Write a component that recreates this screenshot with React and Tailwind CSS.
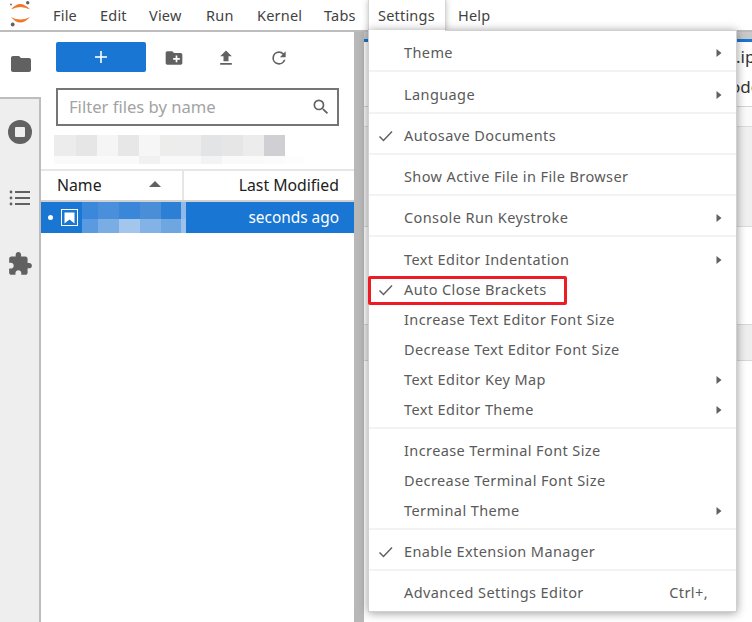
import React from "react";

function Caret() {
  return (
    <svg width="6" height="10" viewBox="0 0 6 10" className="block">
      <path d="M0.5 1 L5.5 5 L0.5 9 Z" fill="#616161" />
    </svg>
  );
}

function Check() {
  return (
    <svg width="16" height="14" viewBox="0 0 16 14" className="block">
      <path d="M1.5 7.5 L5.5 11.5 L14 2.5" fill="none" stroke="#616161" strokeWidth="1.5" />
    </svg>
  );
}

function Item({ label, checked, sub, shortcut }) {
  return (
    <div className="h-[30px] flex items-center relative pl-[35px] pr-[14px] text-[14.5px] text-[#5a5a5a]">
      {checked && (
        <span className="absolute left-[9px] top-[8px]">
          <Check />
        </span>
      )}
      <span className="flex-1 whitespace-nowrap tracking-[0.4px]">{label}</span>
      {sub && <Caret />}
      {shortcut && <span className="mr-[14px] tracking-[0.4px]">{shortcut}</span>}
    </div>
  );
}

function Divider({ h }) {
  return (
    <div className={h === 12 ? "h-[12px] pt-[2px]" : "h-[11px] pt-[2px]"}>
      <div className="h-[2px] bg-[#f3f3f3]" />
    </div>
  );
}

const mosaicTop = ["#ececec", "#e6e6e6", "#f5f5f5", "#e6e7e6", "#f6f6f6", "#ededec", "#ededed", "#e3e4e5", "#e6e6e6", "#ececec", "#d0d0d4", "#ffffff"];
const mosaicWidths = [22, 21, 21, 21, 21, 21, 20, 21, 21, 21, 21, 18];
const mosaicBot = ["#fafafa", "#fafafa", "#fafafa", "#fafafa", "#f1f1f1", "#f9f9f9", "#f9f9f9", "#f2f3f4", "#fafafa", "#fafafa", "#fbfbfb", "#fdfdfd"];
const rowTop = ["#3b87d9", "#4a8fdb", "#3a86d8", "#4a8ed8", "#2d7fd6", "#8fb9e8"];
const rowBot = ["#5a9ae0", "#7aade4", "#a3c6ec", "#82b2e6", "#6ea6e2", "#9cc1ea"];
const rowW = [16, 21, 21, 21, 20, 5];

export default function App() {
  return (
    <div className="w-[752px] h-[622px] bg-white overflow-hidden relative font-['Noto_Sans','Open_Sans',sans-serif] flex flex-col">
      {/* Top bar */}
      <div className="h-[32px] shrink-0 flex border-b-2 border-[#bdbdbd] relative">
        <div className="w-[41px] shrink-0">
          <svg width="41" height="30" viewBox="0 0 41 30" className="block">
            <path d="M11 9.5 Q20 -1.5 30 9.5 Q20 4.5 11 9.5 Z" fill="#f37726" />
            <path d="M11 17 Q20 28 30 17 Q20 22 11 17 Z" fill="#f37726" />
            <circle cx="27.7" cy="2.7" r="1.7" fill="#616161" />
            <circle cx="11" cy="4.5" r="1" fill="#757575" />
            <circle cx="12.7" cy="24.5" r="1.9" fill="#616161" />
          </svg>
        </div>
        <div className="flex h-[30px] pt-[1px] items-center text-[14.5px] text-[#424242] tracking-[0.2px]">
          <span className="ml-[12px] w-[47px]">File</span>
          <span className="w-[49px]">Edit</span>
          <span className="w-[57px]">View</span>
          <span className="w-[51px]">Run</span>
          <span className="w-[67px]">Kernel</span>
          <span className="w-[44px]">Tabs</span>
          <span className="w-[80px] ml-[10px]">Settings</span>
          <span>Help</span>
        </div>
      </div>

      {/* Body */}
      <div className="flex-1 flex min-h-0">
        {/* Sidebar */}
        <div className="w-[41px] shrink-0 flex flex-col border-r-2 border-[#bdbdbd]">
          <div className="h-[65px] bg-white flex items-center justify-center -mr-[2px] relative pb-[1px]">
            <svg width="24" height="24" viewBox="0 0 24 24">
              <path d="M10 4H4c-1.1 0-2 .9-2 2v12c0 1.1.9 2 2 2h16c1.1 0 2-.9 2-2V8c0-1.1-.9-2-2-2h-8l-2-2z" fill="#616161" />
            </svg>
          </div>
          <div className="flex-1 bg-[#eeeeee] border-t-2 border-[#bdbdbd] flex flex-col items-center">
            <div className="h-[66px] flex items-center justify-center">
              <svg width="24" height="24" viewBox="0 0 24 24">
                <circle cx="12" cy="12" r="12" fill="#616161" />
                <rect x="7" y="7" width="10" height="10" rx="1" fill="#eeeeee" />
              </svg>
            </div>
            <div className="h-[66px] flex items-center justify-center">
              <svg width="22" height="16" viewBox="0 0 22 16">
                <circle cx="2" cy="2" r="1.4" fill="#616161" />
                <circle cx="2" cy="8" r="1.4" fill="#616161" />
                <circle cx="2" cy="14" r="1.4" fill="#616161" />
                <rect x="6" y="1" width="15" height="2" fill="#616161" />
                <rect x="6" y="7" width="15" height="2" fill="#616161" />
                <rect x="6" y="13" width="15" height="2" fill="#616161" />
              </svg>
            </div>
            <div className="h-[66px] flex items-center justify-center">
              <svg width="26" height="26" viewBox="0 0 24 24">
                <path d="M20.5 11H19V7c0-1.1-.9-2-2-2h-4V3.5C13 2.12 11.88 1 10.5 1S8 2.12 8 3.5V5H4c-1.1 0-1.99.9-1.99 2v3.8H3.5c1.49 0 2.7 1.21 2.7 2.7s-1.21 2.7-2.7 2.7H2V20c0 1.1.9 2 2 2h3.8v-1.5c0-1.49 1.21-2.7 2.7-2.7s2.7 1.21 2.7 2.7V22H17c1.1 0 2-.9 2-2v-4h1.5c1.38 0 2.5-1.12 2.5-2.5S21.88 11 20.5 11z" fill="#616161" />
              </svg>
            </div>
          </div>
        </div>

        {/* File browser */}
        <div className="w-[313px] shrink-0 flex flex-col">
          <div className="flex items-center h-[30px] mt-[10px] pl-[15px]">
            <div className="w-[90px] h-[30px] bg-[#1976d2] rounded-[2px] flex items-center justify-center">
              <svg width="12" height="12" viewBox="0 0 12 12">
                <rect x="0" y="5.2" width="12" height="1.6" fill="#ffffff" />
                <rect x="5.2" y="0" width="1.6" height="12" fill="#ffffff" />
              </svg>
            </div>
            <svg className="ml-[18px] mt-[2px]" width="20" height="20" viewBox="0 0 24 24">
              <path d="M20 6h-8l-2-2H4c-1.1 0-2 .9-2 2v12c0 1.1.9 2 2 2h16c1.1 0 2-.9 2-2V8c0-1.1-.9-2-2-2zm-1 8h-3v3h-2v-3h-3v-2h3V9h2v3h3v2z" fill="#616161" />
            </svg>
            <svg className="ml-[32px] mt-[2px]" width="20" height="20" viewBox="0 0 24 24">
              <path d="M9 16h6v-6h4l-7-7-7 7h4v6zm-4 2h14v2H5v-2z" fill="#616161" />
            </svg>
            <svg className="ml-[33px] mt-[2px]" width="20" height="20" viewBox="0 0 24 24">
              <path d="M17.65 6.35A7.96 7.96 0 0 0 12 4a8 8 0 1 0 7.73 10h-2.08A6 6 0 1 1 12 6c1.66 0 3.14.69 4.22 1.78L13 11h7V4l-2.35 2.35z" fill="#616161" />
            </svg>
          </div>

          <div className="mt-[16px] ml-[15px] w-[283px] h-[38px] border-2 border-[#757575] flex items-center justify-between pl-[11px] pr-[6px]">
            <span className="text-[16.6px] text-[#a3a3a3] whitespace-nowrap">Filter files by name</span>
            <svg width="20" height="20" viewBox="0 0 24 24">
              <path d="M15.5 14h-.79l-.28-.27A6.47 6.47 0 0 0 16 9.5 6.5 6.5 0 1 0 9.5 16c1.61 0 3.09-.59 4.23-1.57l.27.28v.79l5 4.99L20.49 19l-4.99-5zm-6 0C7.01 14 5 11.99 5 9.5S7.01 5 9.5 5 14 7.01 14 9.5 11.99 14 9.5 14z" fill="#616161" />
            </svg>
          </div>

          <div className="mt-[9px] ml-[13px] h-[29px]">
            <div className="flex h-[21px]">
              {mosaicTop.map((c, i) => (
                <div key={i} className="h-full" style={{ width: mosaicWidths[i], background: c }} />
              ))}
            </div>
            <div className="flex h-[8px]">
              {mosaicBot.map((c, i) => (
                <div key={i} className="h-full" style={{ width: mosaicWidths[i], background: c }} />
              ))}
            </div>
          </div>

          <div className="mt-[5px] h-[33px] flex border-t-2 border-b-2 border-t-[#e6e6e6] border-b-[#d0d0d0] text-[15.8px] text-[#212121]">
            <div className="w-[143px] flex items-center justify-between pl-[16px] pr-[21px] border-r-2 border-[#e6e6e6] relative">
              <span className="pt-[1px]">Name</span>
              <svg width="12" height="6" viewBox="0 0 12 6" className="-mt-[3px]">
                <path d="M6 0 L12 6 L0 6 Z" fill="#616161" />
              </svg>
            </div>
            <div className="flex-1 flex items-center justify-end pr-[15px]">
              <span className="pt-[1px]">Last Modified</span>
            </div>
          </div>

          <div className="h-[31px] bg-[#1976d2] flex items-center text-white text-[15.4px] relative">
            <div className="w-[5px] h-[5px] rounded-full bg-white ml-[7px]" />
            <div className="ml-[8px] w-[17px] h-[17px] border border-white flex items-center justify-center">
              <svg width="11" height="12" viewBox="0 0 11 12">
                <path d="M0.5 0.5H10.5V11.5L5.5 7.5L0.5 11.5Z" fill="#ffffff" />
              </svg>
            </div>
            <div className="ml-[4px] h-full flex flex-col">
              <div className="flex h-[17px]">
                {rowTop.map((c, i) => (
                  <div key={i} style={{ width: rowW[i], background: c }} />
                ))}
              </div>
              <div className="flex h-[14px]">
                {rowBot.map((c, i) => (
                  <div key={i} style={{ width: rowW[i], background: c }} />
                ))}
              </div>
            </div>
            <span className="ml-auto pr-[15px]">seconds ago</span>
          </div>
        </div>

        {/* Splitter */}
        <div className="w-[10px] shrink-0 bg-[#b8b8b8]" />

        {/* Editor behind */}
        <div className="flex-1 min-w-0 overflow-hidden bg-white flex flex-col">
          <div className="h-[7px] shrink-0 bg-[#c9c9c9]" />
          <div className="h-[3px] shrink-0 bg-[#1976d2]" />
          <div className="h-[30px] shrink-0 flex items-center text-[17px] text-[#333] pl-[372px] whitespace-nowrap">.ipynb</div>
          <div className="h-[30px] shrink-0 flex items-center text-[17px] text-[#333] pl-[366px] whitespace-nowrap">ode</div>
          <div className="h-[4px] shrink-0" />
          <div className="h-px shrink-0 bg-[#d4d4d4]" />
          <div className="h-[19px] shrink-0 bg-[#fafafa]" />
          <div className="h-[101px] shrink-0 bg-[#f0f0f0] border-t border-b border-[#dcdcdc]" />
          <div className="h-[97px] shrink-0" />
          <div className="h-[37px] shrink-0 bg-[#eeeeee] border-t border-b border-[#d8d8d8]" />
        </div>
      </div>

      {/* Open menu */}
      <div className="absolute left-[368px] top-0 w-[78px] h-[31px] bg-white border-x border-[#d6d6d6] flex items-center pl-[9px] pt-[1px] text-[14.5px] tracking-[0.2px] text-[#424242] shadow-[0_0_6px_rgba(0,0,0,0.25)]">
        Settings
      </div>
      <div className="absolute left-[368px] top-[30px] w-[369px] h-[582px] bg-white border border-[#d0d0d0] shadow-[0_1px_9px_rgba(0,0,0,0.4)] pt-[7px]">
        <Item label="Theme" sub />
        <Divider h={12} />
        <Item label="Language" sub />
        <Divider h={11} />
        <Item label="Autosave Documents" checked />
        <Divider h={11} />
        <Item label="Show Active File in File Browser" />
        <Divider h={11} />
        <Item label="Console Run Keystroke" sub />
        <Divider h={12} />
        <Item label="Text Editor Indentation" sub />
        <Item label="Auto Close Brackets" checked />
        <Item label="Increase Text Editor Font Size" />
        <Item label="Decrease Text Editor Font Size" />
        <Item label="Text Editor Key Map" sub />
        <Item label="Text Editor Theme" sub />
        <Divider h={11} />
        <Item label="Increase Terminal Font Size" />
        <Item label="Decrease Terminal Font Size" />
        <Item label="Terminal Theme" sub />
        <Divider h={11} />
        <Item label="Enable Extension Manager" checked />
        <Divider h={11} />
        <Item label="Advanced Settings Editor" shortcut="Ctrl+," />
      </div>
      {/* Red annotation */}
      <div className="absolute left-[368px] top-[276px] w-[199px] h-[29px] border-[3px] border-[#ed1c24] rounded-[2px]" />
      <div className="absolute left-[369px] top-[30px] w-[76px] h-[2px] bg-white" />
    </div>
  );
}
